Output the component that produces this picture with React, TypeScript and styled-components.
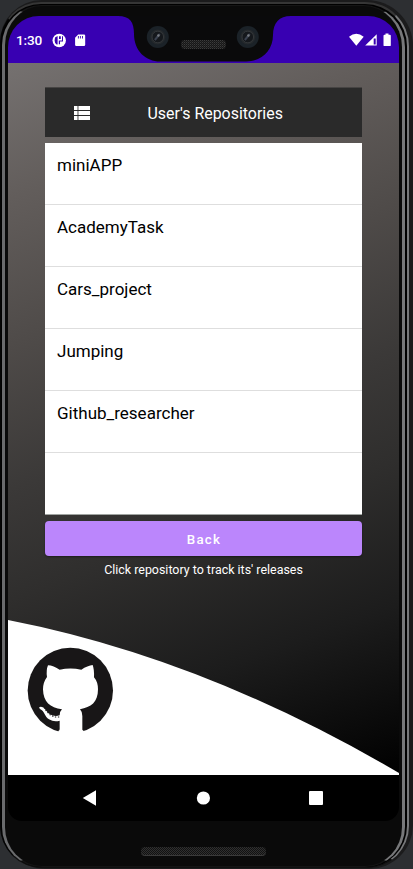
import React from 'react';
import styled, { createGlobalStyle } from 'styled-components';

const GlobalStyle = createGlobalStyle`
  * { box-sizing: border-box; }
  body {
    margin: 0;
    background: #2d2f32;
    font-family: Roboto, "Liberation Sans", sans-serif;
    overflow: hidden;
  }
`;

const Chassis = styled.div`
  width: 413px;
  height: 869px;
  padding: 2px 4px 1px 0;
  border-radius: 42px 46px 44px 46px;
  background: #1b1b1c;
`;

const OuterRim = styled.div`
  height: 866px;
  padding: 1px 2px 0 1px;
  border: solid;
  border-width: 2px 2px 1px 1px;
  border-color: #363636 #77787a #101010 #050505;
  border-radius: 41px 44px 42px 42px;
  background: #000;
`;

const InnerRim = styled.div`
  height: 862px;
  border: solid;
  border-width: 1px 3px 1px 3px;
  border-color: #151515 #77787a #141414 #6a6b6d;
  border-radius: 40px 42px 40px 40px;
  background: #0a0a0a;
  padding: 10px 3px 0 3px;
  display: flex;
  flex-direction: column;
  align-items: center;
`;

const Screen = styled.main`
  width: 391px;
  height: 805px;
  flex: none;
  border-radius: 31px 31px 14px 14px;
  overflow: hidden;
  display: flex;
  flex-direction: column;
`;

const StatusBar = styled.header`
  height: 47px;
  flex: none;
  background: #3800b2;
  color: #fff;
  display: flex;
  align-items: center;
  padding: 1px 7px 0 8px;
  position: relative;
`;

const Clock = styled.span`
  font-size: 13.6px;
  font-weight: 500;
  letter-spacing: -0.15px;
  width: 36px;
`;

const StatusIcons = styled.div`
  display: flex;
  align-items: center;
  height: 16px;
  svg { display: block; }
`;

const RightIcons = styled(StatusIcons)`
  margin-left: auto;
`;

const Notch = styled.svg`
  position: absolute;
  left: 100px;
  top: 0;
`;

const Content = styled.section`
  height: 712px;
  flex: none;
  display: flex;
  flex-direction: column;
  align-items: center;
  padding-top: 24px;
  background: linear-gradient(160deg, #757170 0%, #625d5b 16%, #4f4b49 33%, #3b3938 50%, #2f2e2d 63%, #1c1c1c 80%, #000 100%);
`;

const TitleBar = styled.div`
  width: 317px;
  height: 50px;
  flex: none;
  margin-bottom: 6px;
  padding: 0 0 0 29px;
  background: #2a2a2a;
  border-top: 1px solid #464443;
  display: flex;
  align-items: center;
`;

const Title = styled.h1`
  margin: 0 0 0 57.5px;
  padding-top: 3px;
  color: #fff;
  font-size: 15.95px;
  font-weight: 400;
  line-height: 20px;
  white-space: nowrap;
`;

const RepoList = styled.ul`
  width: 317px;
  height: 372px;
  flex: none;
  margin: 0;
  padding: 0;
  list-style: none;
  background: #fff;
  border-bottom: 1px solid #a0a4a1;
`;

const RepoRow = styled.li`
  height: 62px;
  padding: 11px 12px 0;
  border-bottom: 1px solid #dedede;
  color: #000;
  font-size: 17px;
  line-height: 22px;
`;

const BackButton = styled.button`
  width: 317px;
  height: 35px;
  flex: none;
  margin-top: 6px;
  padding: 1px 0 0 1px;
  border: 0;
  border-radius: 4px;
  background: #bb86fc;
  box-shadow: 0 1px 2px rgba(0, 0, 0, 0.4);
  color: #fff;
  font: 500 13.3px Roboto, sans-serif;
  letter-spacing: 1.25px;
`;

const Hint = styled.p`
  margin: 5px 0 0;
  color: #fff;
  font-size: 12.45px;
  line-height: 17px;
  white-space: nowrap;
`;

const Footer = styled.footer`
  width: 391px;
  height: 155px;
  margin-top: auto;
  flex: none;
  svg { display: block; }
`;

const NavBar = styled.nav`
  height: 46px;
  flex: none;
  background: #000;
  display: flex;
  align-items: center;
  justify-content: space-between;
  padding: 0 76px 0 74px;
  svg { display: block; }
`;

const BottomSpeaker = styled.div`
  width: 125px;
  height: 9px;
  margin-top: 26px;
  border-radius: 4px;
  border-bottom: 1px solid #3a3a3a;
  background: repeating-conic-gradient(#303030 0 25%, #121212 0 50%) 0 0 / 2px 2px;
`;

const repos = ['miniAPP', 'AcademyTask', 'Cars_project', 'Jumping', 'Github_researcher'];

function CameraNotch() {
  return (
    <Notch width="190" height="47" viewBox="108 16 190 47">
      <defs>
        <pattern id="mesh" width="2" height="2" patternUnits="userSpaceOnUse">
          <rect width="2" height="2" fill="#171717" />
          <rect width="1" height="1" fill="#3c3c3c" />
          <rect x="1" y="1" width="1" height="1" fill="#282828" />
        </pattern>
      </defs>
      <path d="M118 16C130 16 134 22 134 34C134 51 146 61.5 160 61.5H246C261 61.5 273 51 273 35C273 23 279 16 291 16Z" fill="#0a0a0b" />
      <rect x="181" y="40" width="45" height="9" rx="4" fill="url(#mesh)" />
      {[157.8, 247.8].map((x) => (
        <g key={x}>
          <circle cx={x} cy="37" r="11" fill="#1b2228" />
          <circle cx={x} cy="37" r="7.5" fill="#25292c" />
          <circle cx={x} cy="37" r="5.8" fill="#15181c" stroke="#33373a" strokeWidth="1" />
          <path d={`M${x - 3} 40L${x + 2} 34`} stroke="#3b4250" strokeWidth="2" />
          <circle cx={x + 0.6} cy="35.5" r="1.2" fill="#777b80" />
        </g>
      ))}
    </Notch>
  );
}

function LeftStatusIcons() {
  return (
    <StatusIcons>
      <svg width="36" height="16" viewBox="52 31 36 16">
        <circle cx="59.2" cy="39.5" r="6.7" fill="#fff" />
        <path d="M55 36.4L57.6 35V43.6H56.6Q54.6 42 54.6 39.5Z M59 35.3H60.8V38H59Z M62 35.3H63V40.4H60V43.2H58.8V39.6H62Z" fill="#3800b2" />
        <path d="M78.2 33.5H84Q85.2 33.5 85.2 34.7V43.8Q85.2 45 84 45H76.3Q75.1 45 75.1 43.8V36.7Z" fill="#fff" />
        <path d="M78.4 35V37.5M80.4 35V37.5M82.5 35V37.5" stroke="#3800b2" strokeWidth="0.9" />
      </svg>
    </StatusIcons>
  );
}

function RightStatusIcons() {
  return (
    <RightIcons>
      <svg width="43" height="16" viewBox="349.5 31.4 43 16" fill="#fff">
        <path d="M349.5 36.1Q356.8 30.3 364.2 36.1L356.8 45.2Z" />
        <path d="M377.2 33.6V45H365.7Z" />
        <path d="M374.2 38H376.2V44H374.2Z" fill="#3800b2" />
        <path d="M386 33H389V34.2H390.3Q391.3 34.2 391.3 35.2V44.6Q391.3 45.5 390.3 45.5H385Q384 45.5 384 44.6V35.2Q384 34.2 385 34.2H386Z" />
      </svg>
    </RightIcons>
  );
}

function ListIcon() {
  return (
    <svg width="16" height="14" viewBox="0 0 16 14" fill="#fff">
      <path d="M0 0H3.5V4H0ZM5 0H16V4H5ZM0 5H3.5V9H0ZM5 5H16V9H5ZM0 10H3.5V14H0ZM5 10H16V14H5Z" />
      <path d="M3.5 0H5V4H3.5ZM3.5 5H5V9H3.5ZM3.5 10H5V14H3.5Z" fill="#aaa" />
    </svg>
  );
}

function Hill() {
  return (
    <svg width="391" height="155" viewBox="0 0 391 155">
      <path d="M0 0Q195.5 38 391 153V155H0Z" fill="#fff" />
      <g transform="translate(12 20) scale(.33333)">
        <circle cx="151" cy="151.5" r="128" fill="#181617" />
        <path
          d="M84 76C94 76 108 82 119 89Q151 82 184 89C196 81 209 76 218 75Q223 88 222 112Q234 126 234 148C234 187 213 202 180 208Q187 215 187 228V269L191 273V282H115V273Q119 272 119 267V242Q102 247 87 238C74 230 74 213 60 207Q54 200 63 200Q71 200 77 210C87 225 102 231 119 226Q120 213 126 208C90 203 70 187 69 148Q69 127 81 111Q78 90 84 76Z"
          fill="#fff"
        />
        <path d="M72 202L80 214L90 224L103 231L118 231" fill="none" stroke="#181617" strokeWidth="3.5" strokeDasharray="4 5" />
      </g>
    </svg>
  );
}

export default function App() {
  return (
    <>
      <GlobalStyle />
      <Chassis>
        <OuterRim>
          <InnerRim>
            <Screen>
              <StatusBar>
                <Clock>1:30</Clock>
                <LeftStatusIcons />
                <CameraNotch />
                <RightStatusIcons />
              </StatusBar>
              <Content>
                <TitleBar>
                  <ListIcon />
                  <Title>User's Repositories</Title>
                </TitleBar>
                <RepoList>
                  {repos.map((name) => (
                    <RepoRow key={name}>{name}</RepoRow>
                  ))}
                </RepoList>
                <BackButton>Back</BackButton>
                <Hint>Click repository to track its' releases</Hint>
                <Footer>
                  <Hill />
                </Footer>
              </Content>
              <NavBar>
                <svg width="15" height="16" viewBox="0 0 15 16"><path d="M.8 8L14 .3V15.7Z" fill="#fff" /></svg>
                <svg width="14" height="14" viewBox="0 0 14 14"><circle cx="7.4" cy="7" r="6.6" fill="#fff" /></svg>
                <svg width="14" height="14" viewBox="0 0 14 14"><rect width="14" height="14" rx="1" fill="#fff" /></svg>
              </NavBar>
            </Screen>
            <BottomSpeaker />
          </InnerRim>
        </OuterRim>
      </Chassis>
    </>
  );
}
